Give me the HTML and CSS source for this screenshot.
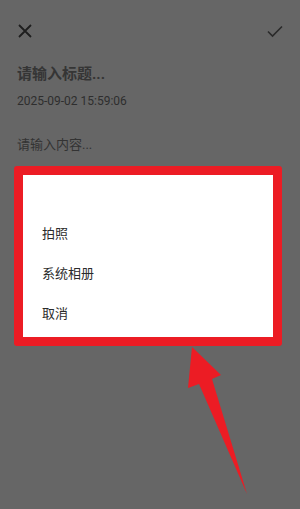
FILE: index.html
```html
<!DOCTYPE html>
<html lang="zh-CN">
<head>
<meta charset="utf-8">
<link rel="stylesheet" href="styles.css">
</head>
<body>
<div class="page">
  <header class="toolbar">
    <svg class="icon" width="24" height="24" viewBox="0 0 24 24"><path d="M6 6 L18 18 M18 6 L6 18" stroke="#1e1e1e" stroke-width="1.8" fill="none"/></svg>
    <svg class="icon" width="24" height="24" viewBox="0 0 24 24"><path d="M5 12.5 L9.5 17 L19 7.5" stroke="#2a2a2a" stroke-width="1.6" fill="none"/></svg>
  </header>
  <main class="editor">
    <div class="title">请输入标题...</div>
    <div class="date">2025-09-02 15:59:06</div>
    <div class="content">请输入内容...</div>
  </main>
</div>

<div class="highlight">
  <div class="dialog">
    <div class="item">拍照</div>
    <div class="item">系统相册</div>
    <div class="item">取消</div>
  </div>
</div>

<svg class="arrow" width="300" height="509" viewBox="0 0 300 509">
  <polygon points="192,347 221,375 212,379 247,494 199,384 188,388" fill="#ec1c24"/>
</svg>
</body>
</html>
```

FILE: styles.css
```css
html, body {
  margin: 0;
  padding: 0;
}
body {
  width: 300px;
  height: 509px;
  background: #666666;
  font-family: Roboto, "Noto Sans CJK SC", sans-serif;
  position: relative;
  overflow: hidden;
}
.page {
  display: flex;
  flex-direction: column;
}
.toolbar {
  display: flex;
  justify-content: space-between;
  align-items: center;
  height: 24px;
  padding: 19px 13px 0 13px;
}
.icon {
  display: block;
}
.editor {
  display: flex;
  flex-direction: column;
  padding: 21px 17px 0 17px;
}
.title {
  font-size: 15px;
  line-height: 20px;
  font-weight: bold;
  color: #353535;
}
.date {
  margin-top: 9px;
  font-size: 12px;
  line-height: 16px;
  color: #2e2e2e;
}
.content {
  margin-top: 27px;
  font-size: 13px;
  line-height: 18px;
  color: #333333;
}
.highlight {
  position: absolute;
  left: 14px;
  top: 166px;
  width: 250px;
  height: 162px;
  border: 9px solid #ec1c24;
  border-radius: 3px;
  background: #ffffff;
}
.dialog {
  display: flex;
  flex-direction: column;
  padding: 39px 0 0 19px;
}
.item {
  height: 40px;
  line-height: 40px;
  font-size: 13px;
  color: #2b2b2b;
}
.arrow {
  position: absolute;
  left: 0;
  top: 0;
}
```
